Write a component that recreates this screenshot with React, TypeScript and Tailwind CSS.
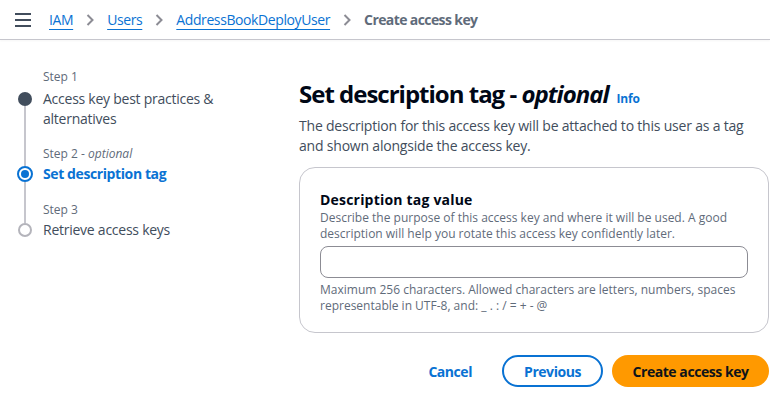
import React from "react";

const font = { fontFamily: '"Open Sans", "Noto Sans", sans-serif' };

function Chevron() {
  return (
    <svg width="8" height="12" viewBox="0 0 8 12" className="mx-[13px] shrink-0">
      <path d="M1.5 1 L6.5 6 L1.5 11" fill="none" stroke="#8c8c94" strokeWidth="2" />
    </svg>
  );
}

type Step = {
  label: React.ReactNode;
  title: string;
  state: "done" | "active" | "todo";
  first?: boolean;
  last?: boolean;
};

function StepRow({ label, title, state, first, last }: Step) {
  const spacer = state === "done" ? "h-[23px]" : state === "active" ? "h-[20px]" : "h-[21px]";
  return (
    <div className="flex">
      <div className="w-4 flex flex-col items-center shrink-0">
        <div className={`w-[2px] ${spacer} ${first ? "" : "bg-[#c6c6cd]"}`} />
        {state === "done" && <div className="w-[14px] h-[14px] rounded-full bg-[#414d5c]" />}
        {state === "active" && (
          <div className="w-4 h-4 rounded-full border-[2px] border-[#0972d3] flex items-center justify-center">
            <div className="w-2 h-2 rounded-full bg-[#0972d3]" />
          </div>
        )}
        {state === "todo" && <div className="w-[14px] h-[14px] rounded-full border-[2px] border-[#b4b4bb]" />}
        <div className={`w-[2px] flex-1 ${last ? "" : "bg-[#c6c6cd]"}`} />
      </div>
      <div className={`ml-[10px] ${last ? "" : first ? "pb-[17px]" : "pb-[18px]"}`}>
        <div className="text-[12px] leading-4 text-[#5f6b7a]">{label}</div>
        <div
          className={`${first ? "mt-[4px]" : "mt-[2px]"} text-[14px] leading-5 w-[200px] ${
            state === "active"
              ? "font-bold text-[#0972d3] tracking-[-0.4px]"
              : "text-[#414d5c] tracking-[-0.25px]"
          }`}
        >
          {title}
        </div>
      </div>
    </div>
  );
}

export default function App() {
  return (
    <div className="w-[770px] h-[415px] bg-white overflow-hidden" style={font}>
      <header className="h-[40px] flex items-center border-b border-[#c6c6cd] shadow-[0_1px_2px_rgba(0,0,0,0.04)]">
        <div className="ml-[15px] w-4 flex flex-col gap-[4px]">
          <div className="h-[2px] bg-[#414d5c]" />
          <div className="h-[2px] bg-[#414d5c]" />
          <div className="h-[2px] bg-[#414d5c]" />
        </div>
        <nav className="ml-[18px] flex items-center text-[14px] tracking-[-0.4px]">
          <span className="text-[#0972d3] underline underline-offset-[4px]">IAM</span>
          <Chevron />
          <span className="text-[#0972d3] underline underline-offset-[4px]">Users</span>
          <Chevron />
          <span className="text-[#0972d3] underline underline-offset-[4px]">AddressBookDeployUser</span>
          <Chevron />
          <span className="text-[#5f6b7a] font-bold tracking-[-0.6px]">Create access key</span>
        </nav>
      </header>
      <div className="flex">
        <aside className="w-[299px] shrink-0 pl-[17px] pt-[29px]">
          <StepRow first label="Step 1" title="Access key best practices & alternatives" state="done" />
          <StepRow
            label={
              <>
                Step 2 - <i>optional</i>
              </>
            }
            title="Set description tag"
            state="active"
          />
          <StepRow last label="Step 3" title="Retrieve access keys" state="todo" />
        </aside>
        <main className="flex-1 pt-[39px]">
          <div className="flex items-baseline">
            <h1 className="text-[24px] leading-[30px] font-bold text-[#000716] tracking-[-1px]">
              Set description tag - <i>optional</i>
            </h1>
            <span className="ml-[8px] text-[12px] font-bold text-[#0972d3] tracking-[-0.2px]">Info</span>
          </div>
          <p className="mt-[7px] text-[14px] leading-5 text-[#414d5c] w-[460px] tracking-[-0.2px]">
            The description for this access key will be attached to this user as a tag and shown alongside the access key.
          </p>
          <section className="mt-[11px] mr-px border border-[#c6c6cd] rounded-[16px] pl-[20px] pr-[20px] pt-[22px] pb-[18px]">
            <div className="text-[14px] leading-5 font-bold text-[#000716] tracking-[0.2px]">Description tag value</div>
            <div className="text-[12px] leading-4 text-[#5f6b7a]">
              Describe the purpose of this access key and where it will be used. A good description will help you rotate this access key confidently later.
            </div>
            <input className="mt-[4px] block w-full h-[32px] border border-[#8c8c94] rounded-[8px] outline-none" />
            <div className="mt-[4px] text-[12px] leading-4 text-[#5f6b7a]">
              Maximum 256 characters. Allowed characters are letters, numbers, spaces representable in UTF-8, and: _ . : / = + - @
            </div>
          </section>
          <div className="mt-[22px] flex items-center justify-end text-[14px] font-bold tracking-[-0.45px]">
            <button className="text-[#0972d3] mr-[30px]">Cancel</button>
            <button className="h-[32px] w-[101px] rounded-full border-2 border-[#0972d3] text-[#0972d3]">
              Previous
            </button>
            <button className="ml-[9px] mr-px h-[32px] w-[157px] rounded-full bg-[#ff9900] text-[#0f141a]">
              Create access key
            </button>
          </div>
        </main>
      </div>
    </div>
  );
}
